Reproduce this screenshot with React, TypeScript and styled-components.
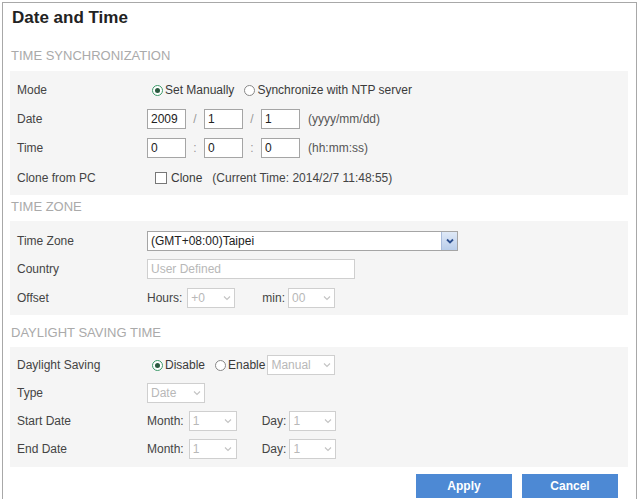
import React, { FC } from 'react';
import styled, { createGlobalStyle } from 'styled-components';

const GlobalStyle = createGlobalStyle`
  html, body {
    margin: 0;
    padding: 0;
    background: #fff;
  }
  body {
    font-family: Arial, 'Liberation Sans', sans-serif;
    font-size: 12px;
    color: #3a3a3a;
  }
`;

const Frame = styled.div`
  box-sizing: border-box;
  width: 635px;
  height: 497px;
  margin: 2px 0 0 2px;
  border: 1px solid #a8a8a8;
  border-bottom: none;
`;

const Title = styled.h1`
  margin: 0;
  height: 30px;
  line-height: 30px;
  padding-left: 9px;
  font-size: 17px;
  font-weight: bold;
  color: #222;
`;

const Heading = styled.div<{ $top: number; $h?: number }>`
  margin-top: ${(p) => p.$top}px;
  height: ${(p) => p.$h || 24}px;
  line-height: ${(p) => p.$h || 24}px;
  padding-left: 8px;
  font-size: 13px;
  color: #aaa;
`;

const Panel = styled.div<{ $pt: number; $pb: number }>`
  margin: 2px 8px 0 7px;
  padding: ${(p) => p.$pt}px 0 ${(p) => p.$pb}px;
  background: #f5f5f5;
`;

const Row = styled.div<{ $h?: number }>`
  display: grid;
  grid-template-columns: 130px 1fr;
  align-items: center;
  height: ${(p) => p.$h || 28}px;
  padding-left: 7px;
`;

const Label = styled.span`
  color: #444;
`;

const Value = styled.div`
  display: flex;
  align-items: center;
  white-space: nowrap;
`;

const Box = styled.span<{ $w: number; $off?: boolean }>`
  box-sizing: border-box;
  display: inline-flex;
  align-items: center;
  width: ${(p) => p.$w}px;
  height: 20px;
  padding-left: 3px;
  background: #fff;
  border: 1px solid ${(p) => (p.$off ? '#cfcfcf' : '#a5a5a5')};
  color: ${(p) => (p.$off ? '#b8b8b8' : '#222')};
`;

const Sep = styled.span`
  width: 18px;
  text-align: center;
  color: #999;
`;

const Hint = styled.span`
  margin-left: 8px;
  color: #555;
`;

const Radio = styled.span<{ $on?: boolean; $gap?: number }>`
  box-sizing: border-box;
  display: inline-flex;
  align-items: center;
  justify-content: center;
  width: 11px;
  height: 11px;
  margin: 0 2px 0 ${(p) => p.$gap ?? 5}px;
  border-radius: 50%;
  border: 1px solid ${(p) => (p.$on ? '#3d9a6a' : '#888')};
  background: #fff;
  &::after {
    content: '';
    display: ${(p) => (p.$on ? 'block' : 'none')};
    width: 5px;
    height: 5px;
    border-radius: 50%;
    background: #2b5a40;
  }
`;

const Check = styled.span`
  box-sizing: border-box;
  display: inline-block;
  width: 12px;
  height: 12px;
  margin: 0 4px 0 8px;
  border: 1px solid #777;
  background: #fff;
`;

const Select = styled.span<{ $w: number; $off?: boolean }>`
  box-sizing: border-box;
  display: inline-flex;
  align-items: center;
  justify-content: space-between;
  width: ${(p) => p.$w}px;
  height: 20px;
  padding-left: 3px;
  background: #fff;
  border: 1px solid ${(p) => (p.$off ? '#cfcfcf' : '#a5a5a5')};
  color: ${(p) => (p.$off ? '#b8b8b8' : '#222')};
`;

const ArrowBox = styled.span<{ $off?: boolean }>`
  display: inline-flex;
  align-items: center;
  justify-content: center;
  width: 15px;
  height: 18px;
  background: ${(p) =>
    p.$off ? 'transparent' : 'linear-gradient(#dfe9f7, #b9cdea)'};
  border-left: ${(p) => (p.$off ? 'none' : '1px solid #a9bcdc')};
`;

const Caption = styled.span<{ $left?: number; $right?: number }>`
  margin-left: ${(p) => p.$left || 0}px;
  margin-right: ${(p) => p.$right ?? 5}px;
  color: #444;
`;

const Buttons = styled.div`
  display: flex;
  justify-content: flex-end;
  gap: 10px;
  margin: 7px 18px 0 0;
`;

const Button = styled.button`
  width: 96px;
  height: 24px;
  border: none;
  background: #4d89d4;
  color: #fff;
  font-family: Arial, 'Liberation Sans', sans-serif;
  font-size: 12px;
  font-weight: bold;
`;

const Chevron: FC<{ off?: boolean }> = ({ off }) => (
  <svg width="8" height="6" viewBox="0 0 8 6">
    <polyline
      points="1,1.5 4,4.5 7,1.5"
      fill="none"
      stroke={off ? '#c4c4c4' : '#2c4f8f'}
      strokeWidth={off ? 1.2 : 1.8}
    />
  </svg>
);

const Drop: FC<{ w: number; text: string; off?: boolean }> = ({ w, text, off }) => (
  <Select $w={w} $off={off}>
    {text}
    <ArrowBox $off={off}>
      <Chevron off={off} />
    </ArrowBox>
  </Select>
);

const App: FC = () => {
  return (
    <>
      <GlobalStyle />
      <Frame>
        <Title>Date and Time</Title>

        <Heading $top={10} $h={26}>TIME SYNCHRONIZATION</Heading>
        <Panel $pt={5} $pb={2}>
          <Row>
            <Label>Mode</Label>
            <Value>
              <Radio $on />
              Set Manually
              <Radio $gap={10} />
              Synchronize with NTP server
            </Value>
          </Row>
          <Row $h={29}>
            <Label>Date</Label>
            <Value>
              <Box $w={39}>2009</Box>
              <Sep>/</Sep>
              <Box $w={39}>1</Box>
              <Sep>/</Sep>
              <Box $w={39}>1</Box>
              <Hint>(yyyy/mm/dd)</Hint>
            </Value>
          </Row>
          <Row $h={30}>
            <Label>Time</Label>
            <Value>
              <Box $w={39}>0</Box>
              <Sep>:</Sep>
              <Box $w={39}>0</Box>
              <Sep>:</Sep>
              <Box $w={39}>0</Box>
              <Hint>(hh:mm:ss)</Hint>
            </Value>
          </Row>
          <Row $h={30}>
            <Label>Clone from PC</Label>
            <Value>
              <Check />
              Clone
              <Caption $left={10}>(Current Time: 2014/2/7 11:48:55)</Caption>
            </Value>
          </Row>
        </Panel>

        <Heading $top={0}>TIME ZONE</Heading>
        <Panel $pt={6} $pb={2}>
          <Row>
            <Label>Time Zone</Label>
            <Value>
              <Drop w={311} text="(GMT+08:00)Taipei" />
            </Value>
          </Row>
          <Row>
            <Label>Country</Label>
            <Value>
              <Box $w={208} $off>
                User Defined
              </Box>
            </Value>
          </Row>
          <Row $h={30}>
            <Label>Offset</Label>
            <Value>
              <Caption>Hours:</Caption>
              <Drop w={48} text="+0" off />
              <Caption $left={27} $right={3}>
                min:
              </Caption>
              <Drop w={47} text="00" off />
            </Value>
          </Row>
        </Panel>

        <Heading $top={6}>DAYLIGHT SAVING TIME</Heading>
        <Panel $pt={4} $pb={4}>
          <Row>
            <Label>Daylight Saving</Label>
            <Value>
              <Radio $on />
              Disable
              <Radio $gap={10} />
              Enable
              <Caption $left={2} $right={0} />
              <Drop w={68} text="Manual" off />
            </Value>
          </Row>
          <Row>
            <Label>Type</Label>
            <Value>
              <Drop w={58} text="Date" off />
            </Value>
          </Row>
          <Row>
            <Label>Start Date</Label>
            <Value>
              <Caption>Month:</Caption>
              <Drop w={48} text="1" off />
              <Caption $left={25} $right={3}>
                Day:
              </Caption>
              <Drop w={47} text="1" off />
            </Value>
          </Row>
          <Row>
            <Label>End Date</Label>
            <Value>
              <Caption>Month:</Caption>
              <Drop w={48} text="1" off />
              <Caption $left={25} $right={3}>
                Day:
              </Caption>
              <Drop w={47} text="1" off />
            </Value>
          </Row>
        </Panel>

        <Buttons>
          <Button>Apply</Button>
          <Button>Cancel</Button>
        </Buttons>
      </Frame>
    </>
  );
};

export default App;
